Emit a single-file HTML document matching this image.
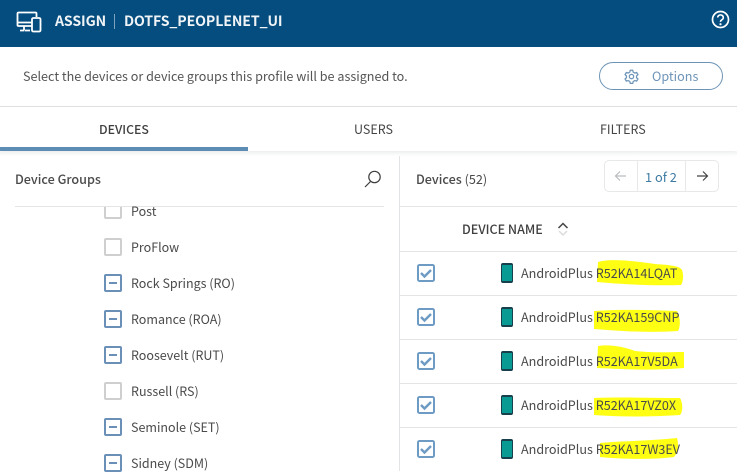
<!DOCTYPE html>
<html><head><meta charset="utf-8">
<style>
html,body{margin:0;padding:0;background:#fff}
body{width:737px;height:471px;overflow:hidden;position:relative;font-family:"Noto Sans CJK JP","Liberation Sans",sans-serif;color:#4a4a4a}
.t{position:absolute;white-space:nowrap;line-height:20px;font-size:12.5px}
.d{font-size:12.6px;letter-spacing:0}
.b{position:absolute}
.cb{position:absolute;left:104px;width:14px;height:14px;border:2px solid #cfcfcf;border-radius:2px;background:#fff}
.cb.m{border-color:#6a90b8}
.cb.m:after{content:"";position:absolute;left:3px;top:6px;width:8px;height:2px;background:#6a90b8}
.ln{position:absolute;height:1px;background:#e2e4e6}
</style></head><body>
<div class="b" style="left:0;top:0;width:737px;height:47px;background:#054d7e"></div>
<svg class="b" style="left:16px;top:11px" width="27" height="22" viewBox="0 0 27 22" fill="none" stroke="#fff" stroke-width="1.8">
<path d="M16 15H2.500a1 1 0 0 1-1-1V2.500a1 1 0 0 1 1-1h17a1 1 0 0 1 1 1V6"/><path d="M1.500 11.500H16M8 15v4M8.500 19.500H14M8 19.500H4"/><rect x="16" y="7" width="8.500" height="13.500" rx="1.300"/>
</svg>
<div class="t" style="left:55px;top:11px;font-size:14.100px;font-weight:700;color:#f0f4f7;letter-spacing:-.1px">ASSIGN</div>
<div class="b" style="left:114px;top:14px;width:1px;height:15px;background:#7fa3bd"></div>
<div class="t" style="left:124px;top:11px;font-size:14.100px;font-weight:700;color:#f0f4f7;letter-spacing:-.1px">DOTFS_PEOPLENET_UI</div>
<svg class="b" style="left:711px;top:10px" width="19" height="19" viewBox="0 0 19 19" fill="none" stroke="#fff" stroke-width="1.700">
<circle cx="9.500" cy="9.500" r="8"/><path d="M6.700 7.500a2.800 2.600 0 1 1 4.300 2.200c-1 .6-1.500 1-1.500 2.200" stroke-width="1.600"/><circle cx="9.500" cy="14.200" r=".6" stroke-width="1"/>
</svg>

<div class="t" style="left:23px;top:66px;font-size:12.600px;color:#555">Select the devices or device groups this profile will be assigned to.</div>
<div class="b" style="left:599px;top:62px;width:122px;height:26px;border:1px solid #6d94b5;border-radius:14px"></div>
<svg class="b" style="left:624px;top:69px" width="15" height="15" viewBox="0 0 24 24" fill="none" stroke="#6d94b8" stroke-width="2">
<circle cx="12" cy="12" r="3.500"/><path d="M10 2h4l.7 3 2.600 1.500 3-.9 2 3.400-2.200 2.100v2.800l2.200 2.100-2 3.400-3-.9-2.600 1.500-.7 3h-4l-.7-3-2.600-1.500-3 .9-2-3.400 2.200-2.100v-2.800L1.700 9l2-3.400 3 .9L9.300 5z"/>
</svg>
<div class="t" style="left:652px;top:66px;font-size:12.600px;color:#6d94b8">Options</div>
<div class="ln" style="left:0;top:106px;width:737px;background:#dfe1e3"></div>

<div class="b" style="left:0;top:107px;width:737px;height:44px;box-shadow:0 2px 4px rgba(0,0,0,.08);background:#fff"></div>
<div class="b" style="left:0;top:147px;width:248px;height:4px;background:#5d8db5"></div>
<div class="t" style="left:99px;top:119px;font-size:12.300px;color:#3f3f3f;font-weight:500">DEVICES</div>
<div class="t" style="left:354px;top:119px;font-size:12.500px;color:#444">USERS</div>
<div class="t" style="left:600px;top:119px;font-size:12.500px;color:#444">FILTERS</div>

<div class="b" style="left:399px;top:152px;width:1px;height:319px;background:#e2e4e6"></div>

<div class="cb" style="top:201px"></div>
<div class="b" style="left:0;top:152px;width:399px;height:54px;background:#fff"></div>
<div class="b" style="left:0;top:152px;width:737px;height:4px;background:linear-gradient(#f1f2f3,#fff)"></div>
<div class="t" style="left:15px;top:169px;font-size:12.600px;color:#4a4a4a;font-weight:500">Device Groups</div>
<svg class="b" style="left:363px;top:169px" width="20" height="20" viewBox="0 0 20 20" fill="none" stroke="#3c3c3c" stroke-width="1.200">
<circle cx="11.500" cy="8" r="5.700"/><path d="M7.500 12.500 2 18"/>
</svg>
<div class="ln" style="left:15px;top:206px;width:369px"></div>
<div class="t" style="left:131px;top:201px">Post</div>
<div class="cb" style="top:238px"></div><div class="t" style="left:131px;top:237px">ProFlow</div>
<div class="cb m" style="top:274px"></div><div class="t" style="left:131px;top:273px">Rock Springs (RO)</div>
<div class="cb m" style="top:310px"></div><div class="t" style="left:131px;top:309px">Romance (ROA)</div>
<div class="cb m" style="top:346px"></div><div class="t" style="left:131px;top:345px">Roosevelt (RUT)</div>
<div class="cb" style="top:382px"></div><div class="t" style="left:131px;top:381px">Russell (RS)</div>
<div class="cb m" style="top:418px"></div><div class="t" style="left:131px;top:417px">Seminole (SET)</div>
<div class="cb m" style="top:454px"></div><div class="t" style="left:131px;top:453px">Sidney (SDM)</div>

<div class="t" style="left:416px;top:169px;font-size:12.600px;color:#4a4a4a;font-weight:500">Devices <span style="font-weight:400">(52)</span></div>
<div class="b" style="left:604px;top:160px;width:113px;height:30px;border:1px solid #e6e8ea;border-radius:5px"></div>
<div class="b" style="left:637px;top:161px;width:1px;height:30px;background:#e6e8ea"></div>
<div class="b" style="left:685px;top:161px;width:1px;height:30px;background:#e6e8ea"></div>
<svg class="b" style="left:614px;top:170px" width="13" height="12" viewBox="0 0 13 12" fill="none" stroke="#b9bcbf" stroke-width="1.200"><path d="M12 6H1.500M6 1.500 1.500 6 6 10.500"/></svg>
<div class="t" style="left:645px;top:167px;font-size:12.800px;color:#3d7ba3">1 of 2</div>
<svg class="b" style="left:696px;top:170px" width="13" height="12" viewBox="0 0 13 12" fill="none" stroke="#444" stroke-width="1.200"><path d="M1 6h10.500M7 1.500 11.500 6 7 10.500"/></svg>
<div class="ln" style="left:400px;top:206px;width:337px"></div>

<div class="t" style="left:462px;top:219px;font-size:12.500px;color:#3f3f3f;font-weight:500">DEVICE NAME</div>
<svg class="b" style="left:556px;top:221px" width="14" height="16" viewBox="0 0 14 16" fill="none"><path d="M2.500 7 7 2.500 11.500 7" stroke="#444" stroke-width="1.500"/><path d="M3 10 7 14 11 10" stroke="#dcdcdc" stroke-width="1.500"/></svg>
<div class="ln" style="left:400px;top:251px;width:337px"></div>
<div class="ln" style="left:400px;top:295px;width:337px"></div>
<div class="ln" style="left:400px;top:339px;width:337px"></div>
<div class="ln" style="left:400px;top:383px;width:337px"></div>
<div class="ln" style="left:400px;top:427px;width:337px"></div>

<svg class="b" style="left:0;top:0" width="737" height="471" viewBox="0 0 737 471">
<g fill="#ffff14">
<path d="M598 262 C610 258 635 261 655 264 C670 265 680 266 682 270 C684 276 683 282 681 285 C650 286 620 284 597 282 Z"/>
<path d="M594 311 C620 309 650 310 677 311 C680 316 681 326 678 331 C650 333 620 331 594 329 Z"/>
<path d="M598 346 C610 344 625 347 635 351 C655 353 670 352 684 352 L684 368 C650 371 620 369 597 368 Z"/>
<path d="M594 398 C620 397 650 398 680 398 C683 403 683 412 680 415 C650 417 620 417 594 415 Z"/>
<path d="M600 443 C620 441 650 441 677 438 C679 445 678 453 674 457 C650 460 620 459 600 457 Z"/>
</g>
<g fill="none">
<g stroke="#6d9bc3" stroke-width="2">
<rect x="418" y="265" width="16" height="16" rx="1.500"/>
<rect x="418" y="309" width="16" height="16" rx="1.500"/>
<rect x="418" y="353" width="16" height="16" rx="1.500"/>
<rect x="418" y="397" width="16" height="16" rx="1.500"/>
<rect x="418" y="441" width="16" height="16" rx="1.500"/>
</g>
<g stroke="#6d9bc3" stroke-width="2.400">
<path d="M421 273l3.500 3.500 6.500-6.500"/>
<path d="M421 317l3.500 3.500 6.500-6.500"/>
<path d="M421 361l3.500 3.500 6.500-6.500"/>
<path d="M421 405l3.500 3.500 6.500-6.500"/>
<path d="M421 449l3.500 3.500 6.500-6.500"/>
</g>
</g>
<g>
<rect x="501" y="263" width="12" height="20" rx="2" fill="#173f4c"/><rect x="502" y="265" width="10" height="16" fill="#0a9a94"/>
<rect x="501" y="307" width="12" height="20" rx="2" fill="#173f4c"/><rect x="502" y="309" width="10" height="16" fill="#0a9a94"/>
<rect x="501" y="351" width="12" height="20" rx="2" fill="#173f4c"/><rect x="502" y="353" width="10" height="16" fill="#0a9a94"/>
<rect x="501" y="395" width="12" height="20" rx="2" fill="#173f4c"/><rect x="502" y="397" width="10" height="16" fill="#0a9a94"/>
<rect x="501" y="439" width="12" height="20" rx="2" fill="#173f4c"/><rect x="502" y="441" width="10" height="16" fill="#0a9a94"/>
</g>
</svg>
<div class="t d" style="left:521px;top:263px">AndroidPlus R52KA14LQAT</div>
<div class="t d" style="left:521px;top:307px">AndroidPlus R52KA159CNP</div>
<div class="t d" style="left:521px;top:351px">AndroidPlus R52KA17V5DA</div>
<div class="t d" style="left:521px;top:395px">AndroidPlus R52KA17VZ0X</div>
<div class="t d" style="left:521px;top:439px">AndroidPlus R52KA17W3EV</div>
</body></html>
